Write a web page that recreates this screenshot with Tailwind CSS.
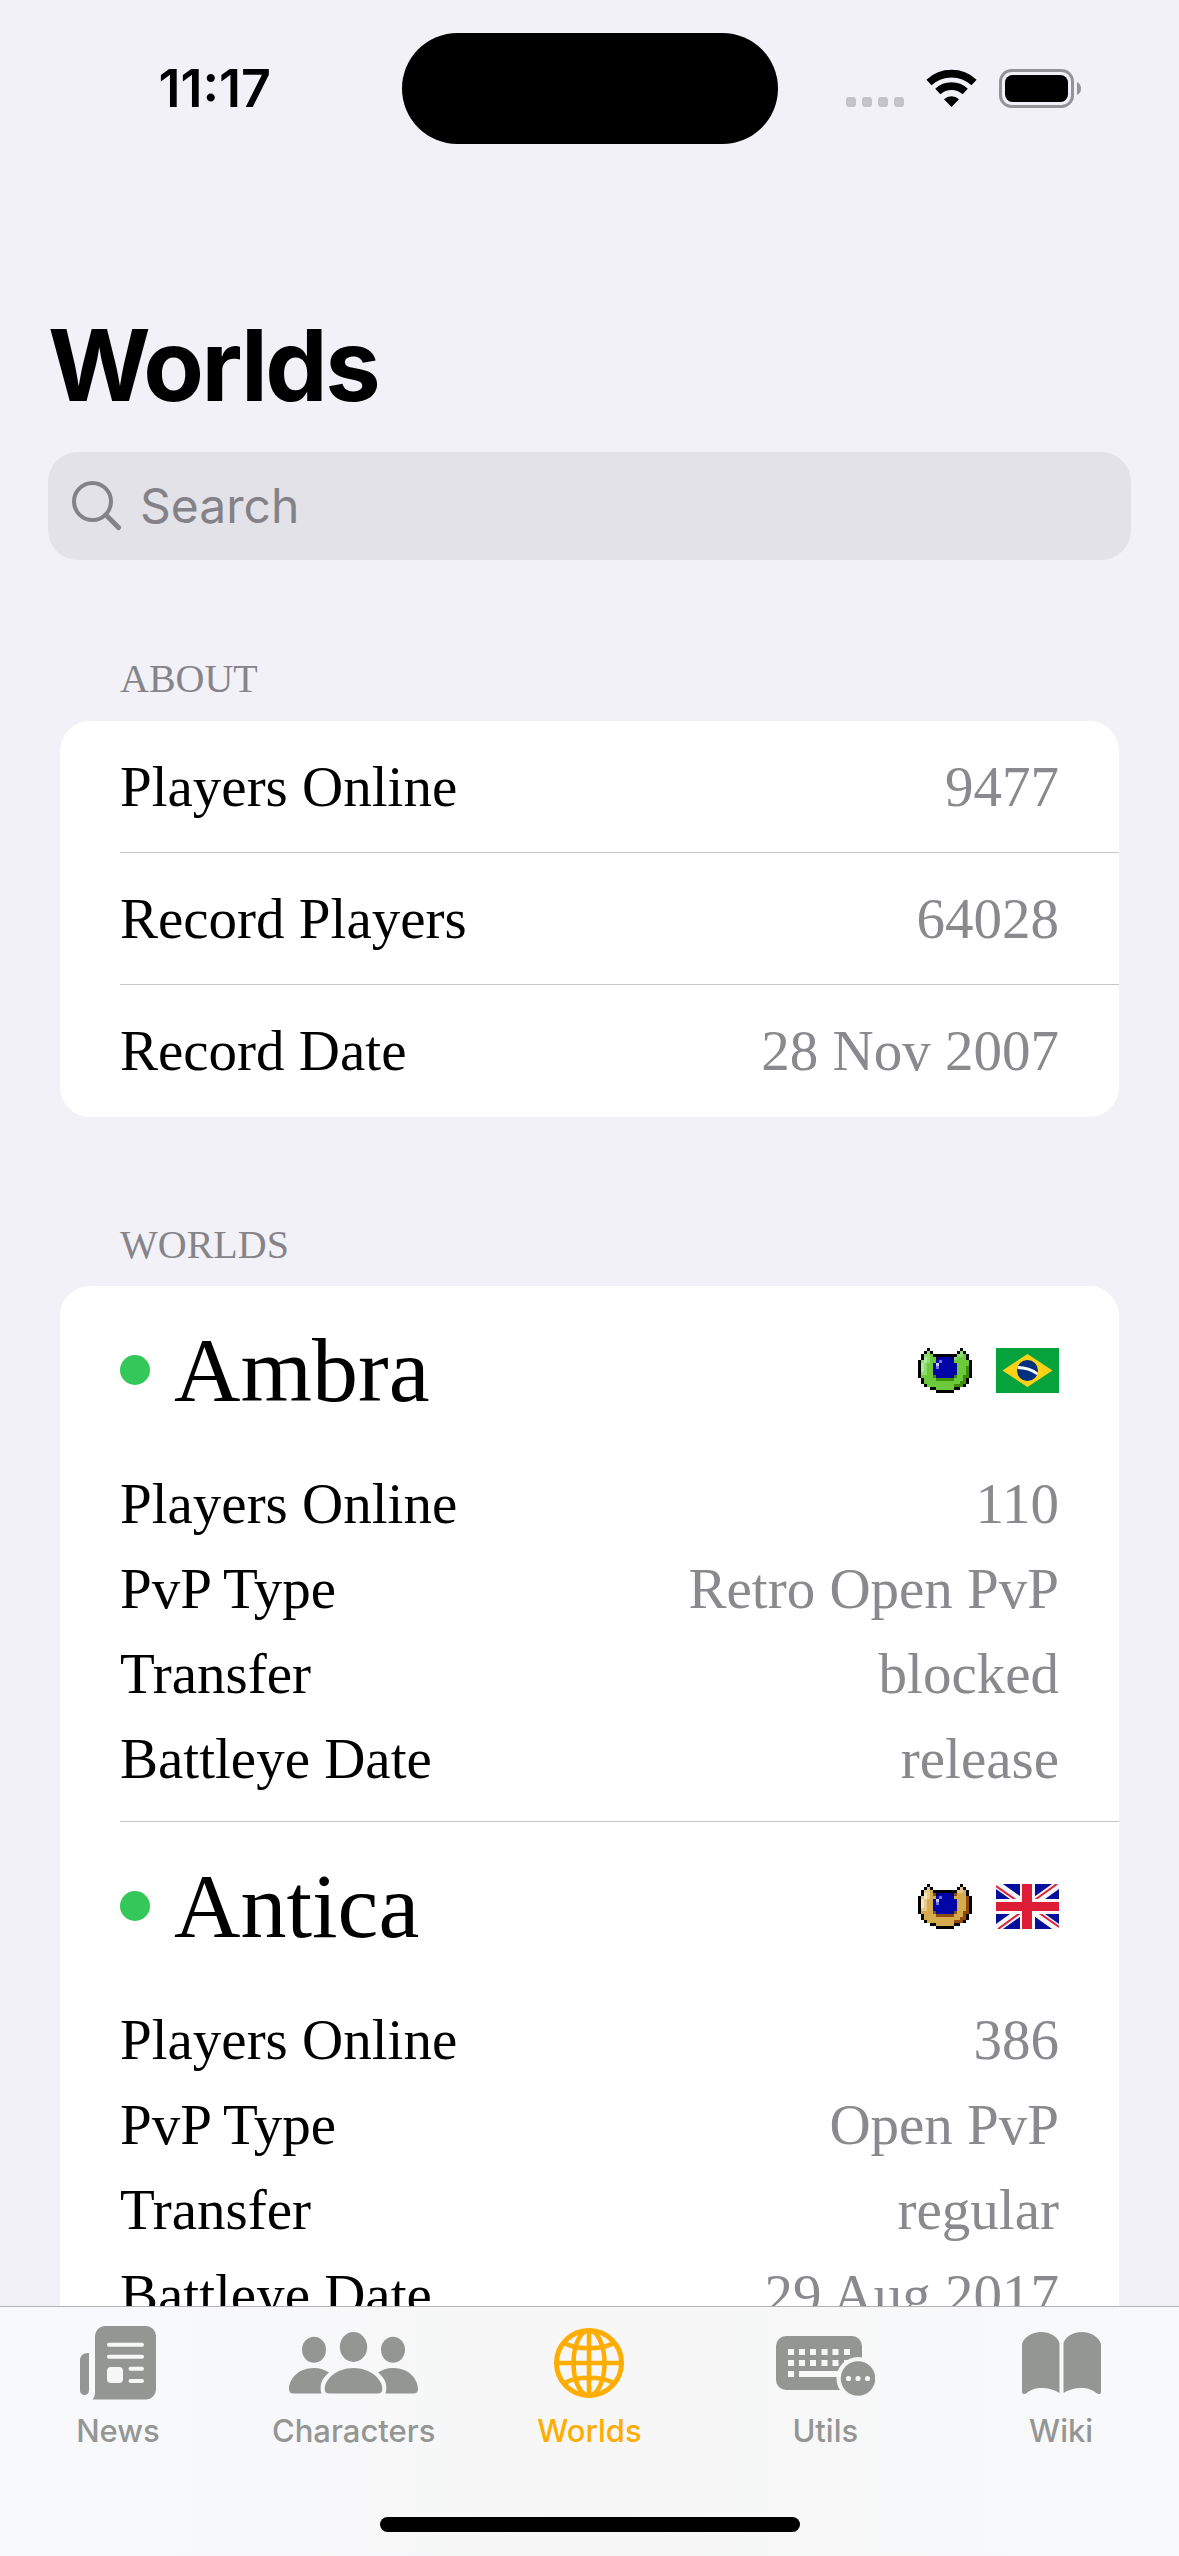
<!DOCTYPE html>
<html lang="en">
<head>
<meta charset="utf-8">
<meta name="viewport" content="width=device-width, initial-scale=1">
<title>Worlds</title>
<script src="https://cdn.jsdelivr.net/npm/@tailwindcss/browser@4"></script>
</head>
<body class="bg-[#f2f1f7]">
<div class="flex h-screen flex-col overflow-hidden bg-[#f2f1f7] font-['Inter',sans-serif] text-black">

  <!-- Status bar -->
  <header class="grid h-[177px] shrink-0 grid-cols-[1fr_376px_1fr] items-start pt-[33px]">
    <div class="flex h-[111px] items-center justify-center pl-7 text-[52px] leading-[60px] font-semibold">11:17</div>
    <div class="h-[111px] rounded-full bg-black"></div>
    <div class="flex h-[111px] items-center justify-end pr-[98px]">
      <svg class="h-10 w-[235px]" viewBox="0 1 235 40" aria-label="Wi-Fi connected, battery full">
        <g fill="#c4c3c9"><rect y="29" width="10" height="10" rx="3"/><rect x="16" y="29" width="10" height="10" rx="3"/><rect x="32" y="29" width="10" height="10" rx="3"/><rect x="48" y="29" width="10" height="10" rx="3"/></g>
        <g fill="none" stroke="#000" stroke-width="7.6"><path d="M83 14.5A33 33 0 0 1 128 14.5"/><path d="M91.8 23.6A20 20 0 0 1 119.2 23.6"/></g>
        <path d="M105.500 39L98 31.200A11 11 0 0 1 113 31.200Z"/>
        <rect x="154.500" y="2.500" width="72" height="36" rx="11" fill="none" stroke="#949398" stroke-width="3"/>
        <rect x="159" y="7" width="63" height="27" rx="7.500"/>
        <path d="M231 14Q235 16 235 20.500T231 27Z" fill="#949398"/>
      </svg>
    </div>
  </header>

  <main class="min-h-0 flex-1 overflow-y-auto [scrollbar-width:none]">
    <div class="px-12 pt-32">
      <h1 class="text-[99px] leading-[120px] font-bold tracking-tight">Worlds</h1>
      <label class="mt-[27px] flex h-[108px] items-center rounded-[30px] bg-[#e3e2e8] pl-6">
        <svg class="h-[50px] w-[50px] shrink-0" viewBox="0 0 50 50" fill="none" stroke="#838288" stroke-linecap="round" aria-label="Search"><circle cx="20.500" cy="20.500" r="18.500" stroke-width="4"/><path d="M34 34L46.500 46.500" stroke-width="5"/></svg>
        <input type="search" placeholder="Search" class="ml-[18px] min-w-0 flex-1 bg-transparent text-[48px] leading-[60px] outline-none placeholder:text-[#838288]">
      </label>
    </div>

    <div class="px-15 font-['Liberation_Serif',serif] text-[57px] leading-[64px]">
      <section class="pt-[95px]">
        <h2 class="px-15 text-[40px] leading-[48px] text-[#858489]">ABOUT</h2>
        <dl class="mt-[18px] rounded-[30px] bg-white pl-15">
          <div class="flex h-[132px] items-center justify-between border-b border-[#c6c6c8] pr-15"><dt>Players Online</dt><dd class="text-[#8a8a8e]">9477</dd></div>
          <div class="flex h-[132px] items-center justify-between border-b border-[#c6c6c8] pr-15"><dt>Record Players</dt><dd class="text-[#8a8a8e]">64028</dd></div>
          <div class="flex h-[132px] items-center justify-between pr-15"><dt>Record Date</dt><dd class="text-[#8a8a8e]">28 Nov 2007</dd></div>
        </dl>
      </section>

      <section class="pt-[104px]">
        <h2 class="px-15 text-[40px] leading-[48px] text-[#858489]">WORLDS</h2>
        <div class="mt-[17px] rounded-[30px] bg-white pl-15">
          <article class="border-b border-[#c6c6c8] pt-6 pr-15 pb-5">
            <div class="flex h-[120px] items-center">
              <span class="size-[30px] rounded-full bg-[#34c759]"></span>
              <h3 class="ml-6 flex-1 text-[92px] leading-[120px]">Ambra</h3>
              <svg class="h-[45px] w-[54px]" viewBox="0 0 18 15" shape-rendering="crispEdges" aria-label="Protected since release">
                <path d="M3 0H4V1H5V2H13V1H14V0H15V1H16V2H17V4H18V10H17V12H16V13H14V14H12V15H6V14H4V13H2V12H1V10H0V4H1V2H2V1H3Z"/>
                <path fill="#6cc93c" d="M3 1H4V2H5V3H13V2H14V1H15V2H16V4H17V10H16V12H15V13H12V14H6V13H3V12H2V10H1V4H2V2H3Z"/>
                <path fill="#8cdb6c" d="M3 1H4V5H3V9H1V4H2V2H3ZM14 1H15V3H13V4H12V3H13V2H14Z"/>
                <path fill="#aeeba0" d="M2 3H3V5H2V8H1V5H2Z"/>
                <path fill="#3d8f00" d="M16 6H17V10H16V12H15V13H12V12H14V11H15V9H16ZM5 9H6V10H12V9H13V10H12V11H6V10H5Z"/>
                <path fill="#000566" d="M6 3H12V4H6Z"/>
                <path fill="#0005a8" d="M7 3H11V4H12V5H13V9H12V10H6V9H5V5H6V4H7Z"/>
                <path fill="#6e72d4" d="M6 5H7V4H8V5H7V7H6Z"/><path fill="#c8caf4" d="M6 5H7V6H6Z"/>
              </svg>
              <svg class="ml-6 h-[45px] w-[63px]" viewBox="0 0 63 45" aria-label="Brazil">
                <path fill="#06a33d" d="M0 0H63V45H0Z"/><path fill="#fdd116" d="M6.500 22.500L31.500 6L56.500 22.500L31.500 39Z"/><circle cx="31.500" cy="22.500" r="10.500" fill="#012f80"/><path d="M21.800 19.500Q33 19.500 41.500 26" fill="none" stroke="#fff" stroke-width="2.800"/>
              </svg>
            </div>
            <dl class="mt-[31px]">
              <div class="flex h-[85px] items-center justify-between"><dt>Players Online</dt><dd class="text-[#8a8a8e]">110</dd></div>
              <div class="flex h-[85px] items-center justify-between"><dt>PvP Type</dt><dd class="text-[#8a8a8e]">Retro Open PvP</dd></div>
              <div class="flex h-[85px] items-center justify-between"><dt>Transfer</dt><dd class="text-[#8a8a8e]">blocked</dd></div>
              <div class="flex h-[85px] items-center justify-between"><dt>Battleye Date</dt><dd class="text-[#8a8a8e]">release</dd></div>
            </dl>
          </article>

          <article class="pt-6 pr-15 pb-5">
            <div class="flex h-[120px] items-center">
              <span class="size-[30px] rounded-full bg-[#34c759]"></span>
              <h3 class="ml-6 flex-1 text-[92px] leading-[120px]">Antica</h3>
              <svg class="h-[45px] w-[54px]" viewBox="0 0 18 15" shape-rendering="crispEdges" aria-label="Protected">
                <path d="M3 0H4V1H5V2H13V1H14V0H15V1H16V2H17V4H18V10H17V12H16V13H14V14H12V15H6V14H4V13H2V12H1V10H0V4H1V2H2V1H3Z"/>
                <path fill="#d6ab4e" d="M3 1H4V2H5V3H13V2H14V1H15V2H16V4H17V10H16V12H15V13H12V14H6V13H3V12H2V10H1V4H2V2H3Z"/>
                <path fill="#e6c88a" d="M3 1H4V5H3V9H1V4H2V2H3ZM14 1H15V3H13V4H12V3H13V2H14Z"/>
                <path fill="#f5e6c0" d="M2 3H3V5H2V8H1V5H2Z"/>
                <path fill="#8f4a08" d="M16 4H17V10H16V12H15V13H12V12H14V11H15V9H16ZM5 3H6V4H5ZM12 3H13V4H12ZM5 9H6V10H12V9H13V10H12V11H6V10H5Z"/>
                <path fill="#000566" d="M6 3H12V4H6Z"/>
                <path fill="#0005a8" d="M7 3H11V4H12V5H13V9H12V10H6V9H5V5H6V4H7Z"/>
                <path fill="#6e72d4" d="M6 5H7V4H8V5H7V7H6Z"/><path fill="#c8caf4" d="M6 5H7V6H6Z"/>
              </svg>
              <svg class="ml-6 h-[45px] w-[63px]" viewBox="0 0 63 45" aria-label="United Kingdom">
                <path fill="#04109b" d="M0 0H63V45H0Z"/>
                <path d="M0 0L63 45M63 0L0 45" stroke="#f7f7f7" stroke-width="8"/>
                <path d="M0 2L24 19M63 43L39 26M61 0L36 18M2 45L27 27" stroke="#e0203a" stroke-width="2"/>
                <path fill="#f7f7f7" d="M24 0H39V15H63V30H39V45H24V30H0V15H24Z"/>
                <path fill="#de1c36" d="M26 0H36V18H63V27H36V45H26V27H0V18H26Z"/>
              </svg>
            </div>
            <dl class="mt-[31px]">
              <div class="flex h-[85px] items-center justify-between"><dt>Players Online</dt><dd class="text-[#8a8a8e]">386</dd></div>
              <div class="flex h-[85px] items-center justify-between"><dt>PvP Type</dt><dd class="text-[#8a8a8e]">Open PvP</dd></div>
              <div class="flex h-[85px] items-center justify-between"><dt>Transfer</dt><dd class="text-[#8a8a8e]">regular</dd></div>
              <div class="flex h-[85px] items-center justify-between"><dt>Battleye Date</dt><dd class="text-[#8a8a8e]">29 Aug 2017</dd></div>
            </dl>
          </article>
        </div>
      </section>
    </div>
  </main>

  <!-- Tab bar -->
  <footer class="flex h-[250px] shrink-0 flex-col items-center justify-between border-t border-[#b2b2b3] bg-linear-to-r from-[#f8f9fc] via-[#f7f7f7] to-[#f8f9fb] pt-4 pb-6">
    <nav class="grid w-full grid-cols-5 text-[31px] leading-9 font-medium text-[#949694]">
      <a href="#news" class="flex flex-col items-center gap-[10px]">
        <span class="flex h-20 items-center"><svg class="h-[74px] w-[76px]" viewBox="0 0 76 74" fill="currentColor">
          <path d="M9 27H8Q0 27 0 35V64.500a4.500 4.500 0 0 0 9 0Z"/>
          <path d="M25 0H66a10 10 0 0 1 10 10V63.500a10 10 0 0 1-10 10H12.500Q15 71 15 66V10a10 10 0 0 1 10-10Z"/>
          <path d="M29 18.700H62M29 30.700H62M50.500 42.700H62M50.500 55H62" stroke="#f7f7f7" stroke-width="4" stroke-linecap="round"/>
          <rect x="27" y="41" width="16" height="16" rx="4" fill="#f7f7f7"/></svg></span>
        <span>News</span>
      </a>
      <a href="#characters" class="flex flex-col items-center gap-[10px]">
        <span class="flex h-20 items-center"><svg class="h-[62px] w-[129px]" viewBox="0 0 129 62" fill="currentColor">
          <ellipse cx="64.500" cy="15" rx="13.700" ry="15"/><ellipse cx="25" cy="17.700" rx="12" ry="13"/><ellipse cx="104" cy="17.700" rx="12" ry="13"/>
          <path d="M40.500 61.500Q35.700 61.500 35.700 57C35.700 47 48 36 64.500 36S93.300 47 93.300 57Q93.300 61.500 88.500 61.500Z"/>
          <path d="M32.500 61.500H4.500Q0 61.500 0 57C0 48 8 36 25 36C31 36 36 38 40 40.500C33 46 30 53 32.500 61.500Z"/>
          <path d="M96.500 61.500H124.500Q129 61.500 129 57C129 48 121 36 104 36C98 36 93 38 89 40.500C96 46 99 53 96.500 61.500Z"/></svg></span>
        <span>Characters</span>
      </a>
      <a href="#worlds" aria-current="page" class="flex flex-col items-center gap-[10px] text-[#ffad00]">
        <span class="flex h-20 items-center"><svg class="size-[70px]" viewBox="0 0 70 70" fill="none" stroke="currentColor" stroke-width="4.500">
          <circle cx="35" cy="35" r="32.500" stroke-width="5"/><ellipse cx="35" cy="35" rx="15.500" ry="32.500"/><path d="M35 2V68M2 35H68M10.500 15C22 22 48 22 59.500 15M10.500 55C22 48 48 48 59.500 55"/></svg></span>
        <span>Worlds</span>
      </a>
      <a href="#utils" class="flex flex-col items-center gap-[10px]">
        <span class="flex h-20 items-center"><svg class="h-[66px] w-[99px]" viewBox="0 -6 99 66" fill="currentColor">
          <rect width="86" height="54" rx="10"/>
          <g fill="#f7f7f7"><path d="M12 13h6v6h-6zM23 13h6v6h-6zM34 13h6v6h-6zM45.500 13h6v6h-6zM56.500 13h6v6h-6zM68 13h6v6h-6zM12 24h6v6h-6zM23 24h6v6h-6zM34 24h6v6h-6zM45.500 24h6v6h-6zM56.500 24h6v6h-6zM68 24h6v6h-6zM12 35h6v6h-6zM23 35h42v6H23z"/><circle cx="82" cy="42.500" r="21.500"/></g>
          <circle cx="82" cy="42.500" r="17.300"/><g fill="#f7f7f7"><circle cx="72.500" cy="42.500" r="2.600"/><circle cx="82" cy="42.500" r="2.600"/><circle cx="91.500" cy="42.500" r="2.600"/></g></svg></span>
        <span>Utils</span>
      </a>
      <a href="#wiki" class="flex flex-col items-center gap-[10px]">
        <span class="flex h-20 items-center"><svg class="h-[62px] w-[79px]" viewBox="0 0 79 62" fill="currentColor">
          <path d="M0 12C2 5 10 0 19 0S35 4 37.500 11V61C33 58 27 56 20 56S8 58 4 61.500Q0 63 0 60Z"/>
          <path d="M79 12C77 5 69 0 60 0S44 4 41.500 11V61C46 58 52 56 59 56S71 58 75 61.500Q79 63 79 60Z"/></svg></span>
        <span>Wiki</span>
      </a>
    </nav>
    <div class="h-[15px] w-[420px] rounded-full bg-black"></div>
  </footer>
</div>
</body>
</html>
